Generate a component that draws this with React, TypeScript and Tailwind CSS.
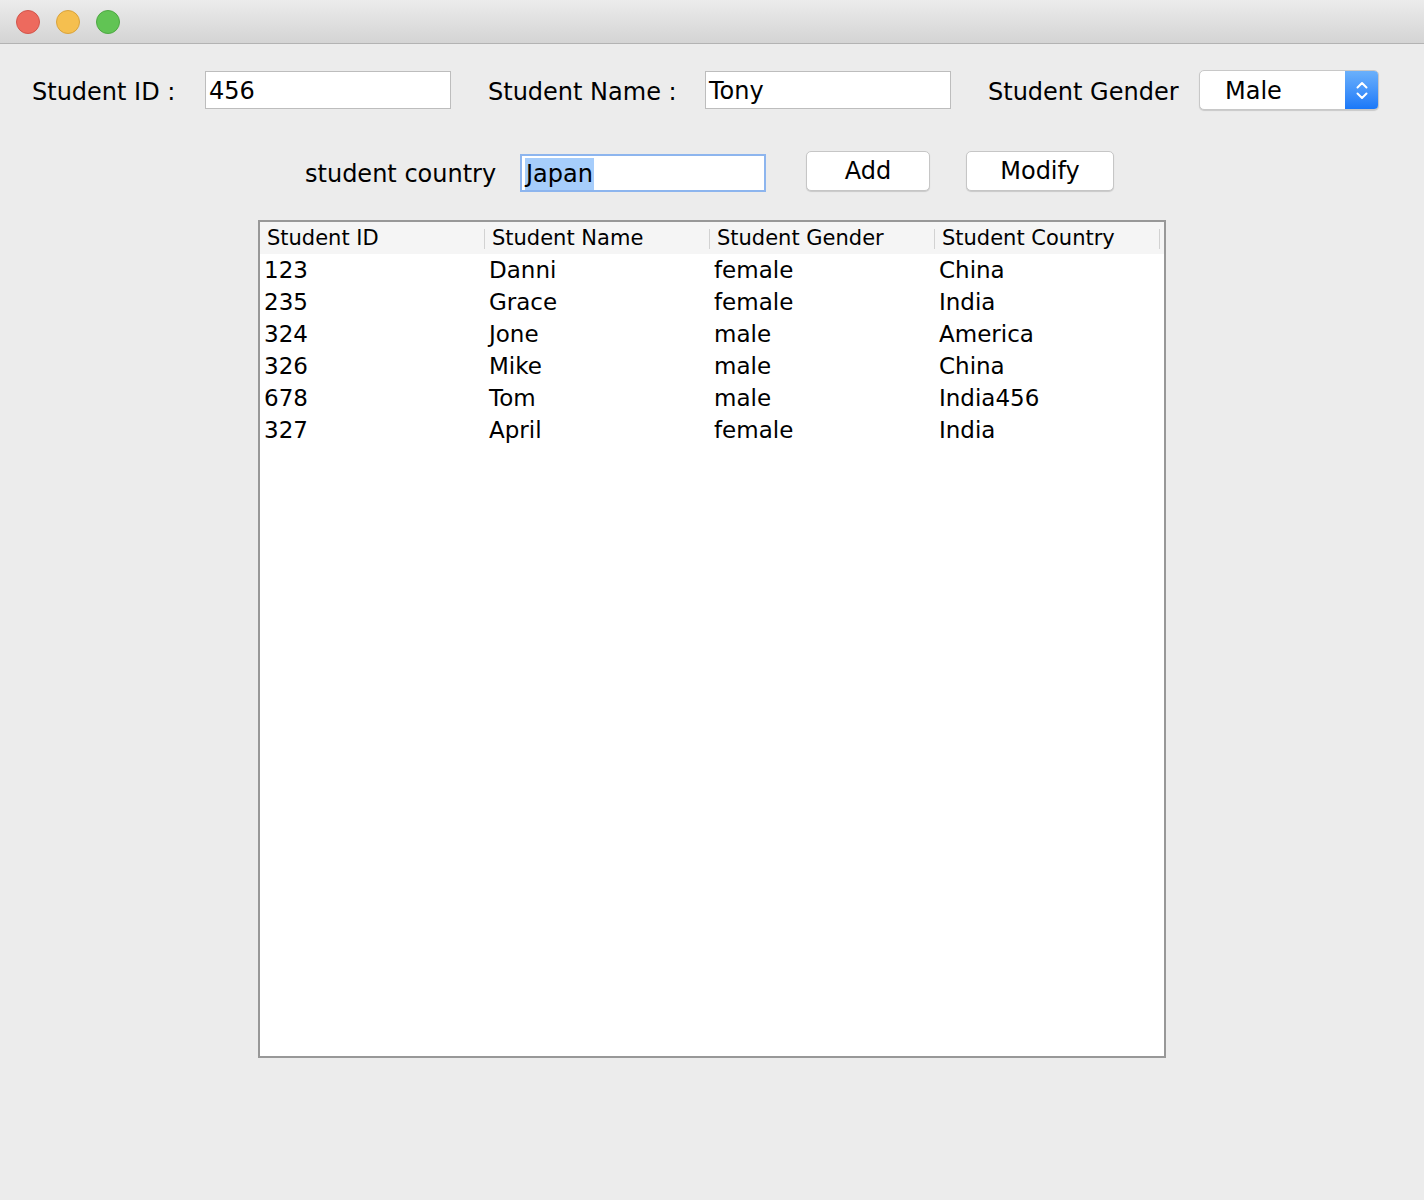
import { useState } from "react";

interface Student {
  id: string;
  name: string;
  gender: string;
  country: string;
}

const initialStudents: Student[] = [
  { id: "123", name: "Danni", gender: "female", country: "China" },
  { id: "235", name: "Grace", gender: "female", country: "India" },
  { id: "324", name: "Jone", gender: "male", country: "America" },
  { id: "326", name: "Mike", gender: "male", country: "China" },
  { id: "678", name: "Tom", gender: "male", country: "India456" },
  { id: "327", name: "April", gender: "female", country: "India" },
];

const FONT = "font-['DejaVu_Sans',sans-serif]";

const TrafficLights = () => (
  <div className="flex items-center gap-[16px] pl-[16px]">
    <span className="w-[24px] h-[24px] rounded-full bg-[#ed6a5e] border border-[#d2554b]" />
    <span className="w-[24px] h-[24px] rounded-full bg-[#f5bf4f] border border-[#d9a33c]" />
    <span className="w-[24px] h-[24px] rounded-full bg-[#61c454] border border-[#4ea843]" />
  </div>
);

const TextField = ({ value, focused }: { value: string; focused?: boolean }) => (
  <div
    className={`h-[38px] w-[246px] bg-white flex items-center pl-[3px] pt-[2px] text-[24px] text-black ${
      focused ? "border-2 border-[#8db5ee]" : "border border-[#bdbdbd]"
    }`}
  >
    {focused ? (
      <span className="bg-[#a6cdfb] leading-[32px] px-[1px]">{value}</span>
    ) : (
      <span>{value}</span>
    )}
  </div>
);

const ComboBox = ({ value }: { value: string }) => (
  <div className="h-[40px] w-[180px] flex bg-white rounded-[5px] border border-[#c8c8c8] shadow-[0_1px_1px_rgba(0,0,0,0.15)] overflow-hidden">
    <div className="flex-1 flex items-center pl-[25px] pt-[1px] text-[24px] text-black">
      {value}
    </div>
    <div className="w-[33px] bg-gradient-to-b from-[#6ab0fb] to-[#1a78f8] flex flex-col items-center justify-center gap-[3px]">
      <svg width="12" height="8" viewBox="0 0 12 8">
        <path d="M1.5 6.5 L6 2 L10.5 6.5" fill="none" stroke="white" strokeWidth="2" strokeLinecap="round" strokeLinejoin="round" />
      </svg>
      <svg width="12" height="8" viewBox="0 0 12 8">
        <path d="M1.5 1.5 L6 6 L10.5 1.5" fill="none" stroke="white" strokeWidth="2" strokeLinecap="round" strokeLinejoin="round" />
      </svg>
    </div>
  </div>
);

const Button = ({ label, width }: { label: string; width: string }) => (
  <button
    className={`${width} h-[40px] bg-white rounded-[5px] border border-[#c6c6c6] shadow-[0_1px_1px_rgba(0,0,0,0.15)] text-[24px] text-black flex items-center justify-center`}
  >
    {label}
  </button>
);

const App = () => {
  const [students] = useState<Student[]>(initialStudents);

  return (
    <div className={`w-[1424px] h-[1200px] bg-[#ececec] flex flex-col ${FONT}`}>
      {/* title bar */}
      <div className="h-[44px] bg-gradient-to-b from-[#ececec] to-[#d4d4d4] border-b border-[#b3b3b3] flex items-center">
        <TrafficLights />
      </div>

      {/* row 1 */}
      <div className="flex items-center pl-[32px] mt-[26px] h-[40px]">
        <div className="w-[173px] pt-[3px] text-[24px] text-black">Student ID :</div>
        <TextField value="456" />
        <div className="w-[217px] ml-[37px] pt-[3px] text-[24px] text-black">Student Name :</div>
        <TextField value="Tony" />
        <div className="w-[211px] ml-[37px] pt-[3px] text-[24px] text-black">Student Gender</div>
        <ComboBox value="Male" />
      </div>

      {/* row 2 */}
      <div className="flex items-start pl-[305px] mt-[41px]">
        <div className="w-[215px] h-[40px] mt-[3px] flex items-center text-[24px] text-black">
          student country
        </div>
        <div className="mt-[3px]">
          <TextField value="Japan" focused />
        </div>
        <div className="ml-[40px]">
          <Button label="Add" width="w-[124px]" />
        </div>
        <div className="ml-[36px]">
          <Button label="Modify" width="w-[148px]" />
        </div>
      </div>

      {/* table */}
      <div className="ml-[258px] mt-[26px] w-[908px] h-[838px] bg-white border-2 border-[#989898] flex flex-col">
        <div className="h-[32px] bg-[#f5f5f5] flex items-center pr-[4px] pt-[2px]">
          {["Student ID", "Student Name", "Student Gender", "Student Country"].map((h) => (
            <div
              key={h}
              className="w-[225px] h-[20px] flex items-center pl-[7px] border-r border-[#d2d2d2] text-[21px] text-black"
            >
              {h}
            </div>
          ))}
        </div>
        {students.map((s) => (
          <div key={s.id} className="h-[32px] flex items-center text-[23px] text-black">
            <div className="w-[225px] pl-[4px]">{s.id}</div>
            <div className="w-[225px] pl-[4px]">{s.name}</div>
            <div className="w-[225px] pl-[4px]">{s.gender}</div>
            <div className="w-[225px] pl-[4px]">{s.country}</div>
          </div>
        ))}
      </div>
    </div>
  );
};

export default App;
